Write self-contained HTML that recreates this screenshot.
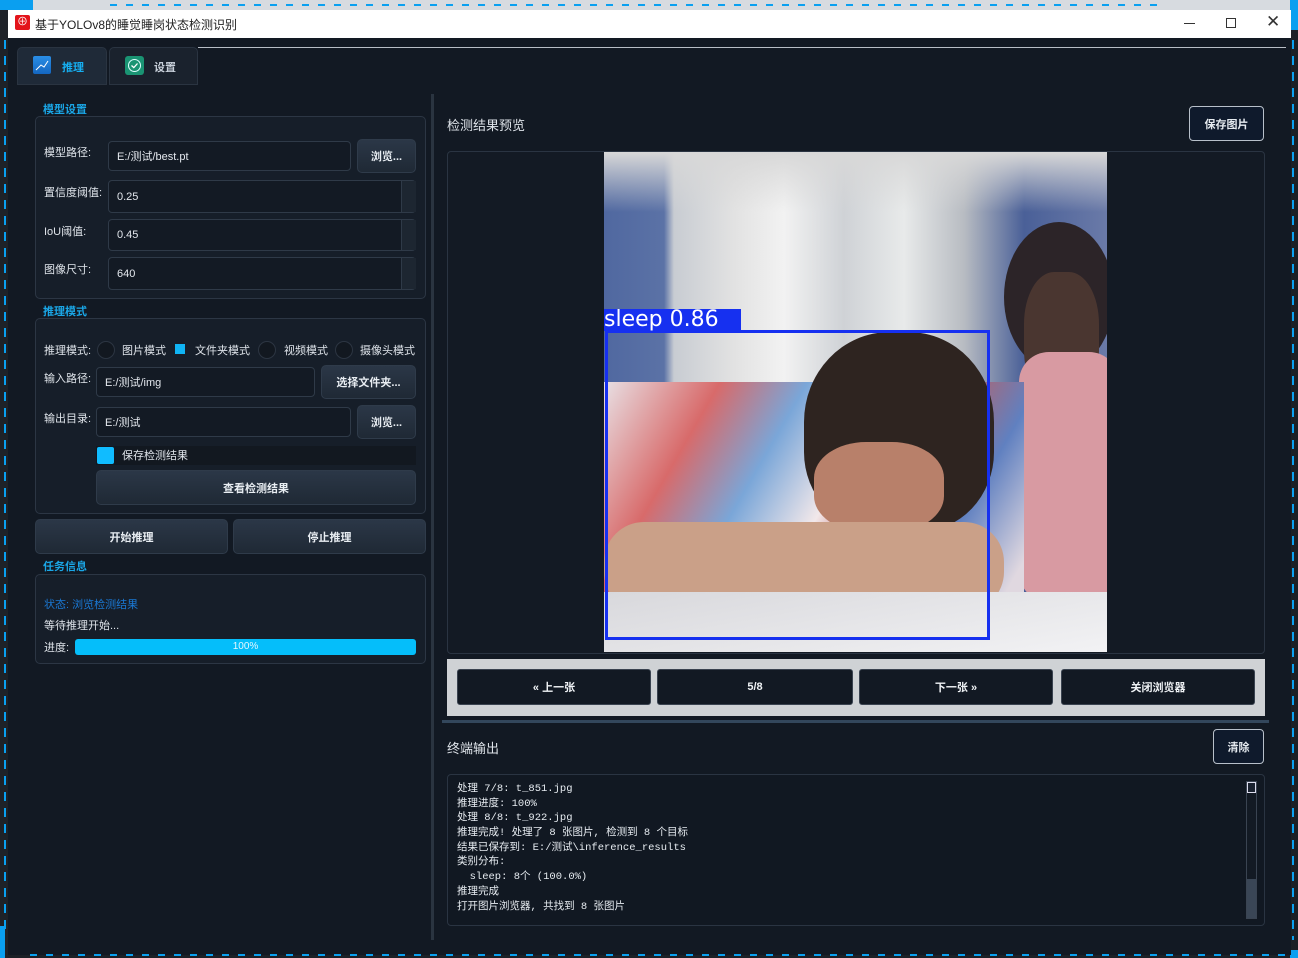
<!DOCTYPE html>
<html><head><meta charset="utf-8"><style>
*{box-sizing:border-box;margin:0;padding:0}
body{width:1298px;height:958px;overflow:hidden;background:#1c2026;font-family:"Liberation Sans","Noto Sans CJK SC",sans-serif;position:relative;color:#dde3ea}
.a{position:absolute}
.dash{position:absolute;background:repeating-linear-gradient(90deg,#0aa0f0 0 7px,transparent 7px 16px)}
.vdash{position:absolute;background:repeating-linear-gradient(180deg,#0aa0f0 0 9px,transparent 9px 16px)}
.win{position:absolute;left:8px;top:10px;width:1283px;height:945px;background:#121923}
.title{position:absolute;left:0;top:0;width:1283px;height:28px;background:#fff;color:#222;font-size:12px}
.grp{position:absolute;border:1px solid #2c3644;border-radius:5px;background:#161e29}
.gt{position:absolute;color:#1aa6e6;font-size:11px;font-weight:bold;margin-top:-1px}
.lbl{position:absolute;font-size:11px;color:#dfe4ea;margin-top:-2px}
.inp{position:absolute;border:1px solid #2f3a48;border-radius:4px;background:#131a24;font-size:11px;color:#e4e8ee;padding-left:8px;display:flex;align-items:center}
.btn{position:absolute;border:1px solid #2f3b4a;border-radius:5px;background:linear-gradient(#2b3747,#1f2935);font-size:11px;font-weight:bold;color:#e8edf2;display:flex;align-items:center;justify-content:center}
.spin{position:absolute;width:15px;border-left:1px solid #2f3a48;background:#1d2631}
.nb{position:absolute;top:669px;height:36px;background:#121923;border:1px solid #3a4350;border-radius:3px;color:#f0f3f6;font-size:11px;font-weight:bold;display:flex;align-items:center;justify-content:center}
.term div{height:14.7px;white-space:pre}
</style></head><body>
<div class="a" style="left:0;top:0;width:1298px;height:10px;background:#d7dbe0"></div>
<div class="dash" style="left:110px;top:4px;width:1050px;height:2px"></div>
<div class="a" style="left:0;top:0;width:33px;height:30px;background:#0a9ff0"></div>
<div class="a" style="left:1290px;top:0;width:8px;height:30px;background:#0a9ff0"></div>
<div class="a" style="left:0;top:10px;width:8px;height:948px;background:#1e2228"></div>
<div class="vdash" style="left:4px;top:40px;width:2px;height:890px"></div>
<div class="vdash" style="left:1292px;top:40px;width:2px;height:900px"></div>
<div class="a" style="left:0;top:926px;width:5px;height:32px;background:#0a9ff0"></div>
<div class="a" style="left:1290px;top:950px;width:8px;height:8px;background:#0a9ff0"></div>
<div class="win">
 <div class="title">
  <div class="a" style="left:7px;top:5px;width:15px;height:15px;background:#e3141b;border-radius:2px;color:#fff;font-size:11px;text-align:center;line-height:15px">⊕</div>
  <div class="a" style="left:27px;top:6px">基于YOLOv8的睡觉睡岗状态检测识别</div>
  <div class="a" style="left:1176px;top:13px;width:11px;height:1px;background:#333"></div>
  <div class="a" style="left:1218px;top:8px;width:10px;height:10px;border:1px solid #333"></div>
  <div class="a" style="left:1258px;top:2px;font-size:17px;color:#333">✕</div>
 </div>
 <div class="a" style="left:190px;top:37px;width:1088px;height:1px;background:#b8bec6"></div>
 <div class="a" style="left:9px;top:37px;width:90px;height:38px;background:#1f2a38;border:1px solid #2a3441;border-radius:5px 5px 0 0"></div>
 <div class="a" style="left:25px;top:46px;width:18px;height:18px;background:linear-gradient(#2a8ee6,#1466c0);border-radius:2px"><svg width="18" height="18"><path d="M3 14 L8 9 L11 11 L15 5" stroke="#fff" fill="none" stroke-width="1"/></svg></div>
 <div class="a" style="left:54px;top:49px;font-size:11px;font-weight:bold;color:#16aef0">推理</div>
 <div class="a" style="left:101px;top:37px;width:89px;height:38px;background:#1a222d;border:1px solid #2a3441;border-radius:5px 5px 0 0"></div>
 <div class="a" style="left:117px;top:46px;width:19px;height:19px;background:#1a9473;border-radius:3px"><svg width="19" height="19"><circle cx="9.5" cy="9.5" r="6" stroke="#dff" fill="none"/><path d="M6.5 9.5 L8.8 11.6 L12.5 7.5" stroke="#fff" fill="none" stroke-width="1.3"/></svg></div>
 <div class="a" style="left:146px;top:49px;font-size:11px;color:#c8d0da;font-weight:bold">设置</div>
 <div class="a" style="left:423px;top:84px;width:3px;height:846px;background:#2a3440"></div>
</div>
<!-- left panel -->
<div class="gt" style="left:43px;top:102px">模型设置</div>
<div class="grp" style="left:35px;top:116px;width:391px;height:183px"></div>
<div class="lbl" style="left:44px;top:146px">模型路径:</div>
<div class="inp" style="left:108px;top:141px;width:243px;height:30px">E:/测试/best.pt</div>
<div class="btn" style="left:357px;top:139px;width:59px;height:34px">浏览...</div>
<div class="lbl" style="left:44px;top:186px">置信度阈值:</div>
<div class="inp" style="left:108px;top:180px;width:308px;height:33px">0.25</div><div class="spin" style="left:401px;top:181px;height:31px"></div>
<div class="lbl" style="left:44px;top:225px">IoU阈值:</div>
<div class="inp" style="left:108px;top:219px;width:308px;height:32px">0.45</div><div class="spin" style="left:401px;top:220px;height:30px"></div>
<div class="lbl" style="left:44px;top:263px">图像尺寸:</div>
<div class="inp" style="left:108px;top:257px;width:308px;height:33px">640</div><div class="spin" style="left:401px;top:258px;height:31px"></div>

<div class="gt" style="left:43px;top:304px">推理模式</div>
<div class="grp" style="left:35px;top:318px;width:391px;height:196px"></div>
<div class="lbl" style="left:44px;top:344px">推理模式:</div>
<div class="a" style="left:97px;top:341px;width:18px;height:18px;border:1px solid #2c3542;border-radius:50%;background:#121820"></div>
<div class="lbl" style="left:122px;top:344px">图片模式</div>
<div class="a" style="left:175px;top:344px;width:10px;height:10px;background:#10b4f4"></div>
<div class="lbl" style="left:195px;top:344px">文件夹模式</div>
<div class="a" style="left:258px;top:341px;width:18px;height:18px;border:1px solid #2c3542;border-radius:50%;background:#121820"></div>
<div class="lbl" style="left:284px;top:344px">视频模式</div>
<div class="a" style="left:335px;top:341px;width:18px;height:18px;border:1px solid #2c3542;border-radius:50%;background:#121820"></div>
<div class="lbl" style="left:360px;top:344px">摄像头模式</div>
<div class="lbl" style="left:44px;top:372px">输入路径:</div>
<div class="inp" style="left:96px;top:367px;width:219px;height:30px">E:/测试/img</div>
<div class="btn" style="left:321px;top:365px;width:95px;height:34px">选择文件夹...</div>
<div class="lbl" style="left:44px;top:412px">输出目录:</div>
<div class="inp" style="left:96px;top:407px;width:255px;height:30px">E:/测试</div>
<div class="btn" style="left:357px;top:405px;width:59px;height:34px">浏览...</div>
<div class="a" style="left:96px;top:446px;width:320px;height:19px;background:#121820"></div>
<div class="a" style="left:97px;top:447px;width:17px;height:17px;background:#10bcff;border-radius:2px"></div>
<div class="lbl" style="left:122px;top:449px">保存检测结果</div>
<div class="btn" style="left:96px;top:470px;width:320px;height:35px">查看检测结果</div>
<div class="btn" style="left:35px;top:519px;width:193px;height:35px">开始推理</div>
<div class="btn" style="left:233px;top:519px;width:193px;height:35px">停止推理</div>
<div class="gt" style="left:43px;top:559px">任务信息</div>
<div class="grp" style="left:35px;top:574px;width:391px;height:90px"></div>
<div class="lbl" style="left:44px;top:598px;color:#1a78d4">状态: 浏览检测结果</div>
<div class="lbl" style="left:44px;top:619px">等待推理开始...</div>
<div class="lbl" style="left:44px;top:641px">进度:</div>
<div class="a" style="left:75px;top:639px;width:341px;height:16px;background:#05befa;border-radius:3px;font-size:10px;color:#e6f7ff;text-align:center;line-height:16px">100%</div>
<!-- right -->
<div class="a" style="left:447px;top:115px;font-size:13px;color:#dfe4ea">检测结果预览</div>
<div class="a" style="left:1189px;top:106px;width:75px;height:35px;border:1px solid #b8c0ca;border-radius:4px;background:#0f1a2c;font-size:11px;font-weight:bold;color:#e6ebf0;display:flex;align-items:center;justify-content:center">保存图片</div>
<div class="a" style="left:447px;top:151px;width:818px;height:503px;border:1px solid #2a3442;border-radius:4px;background:#131a24"></div>
<div class="a" style="left:604px;top:152px;width:503px;height:500px;overflow:hidden;background:linear-gradient(90deg,#5068a0 0,#5b72a6 60px,#c8ccd2 70px,#e2e2e2 130px,#f2f2f2 180px,#cfd2d6 240px,#e8eaea 300px,#b8bcc2 360px,#4a6098 420px,#6a7aa8 503px)">
 <div class="a" style="left:0;top:0;width:503px;height:60px;background:linear-gradient(#d8d8d8,rgba(220,220,220,0))"></div>
 <div class="a" style="left:400px;top:70px;width:110px;height:150px;border-radius:50%;background:#2c2428"></div>
 <div class="a" style="left:420px;top:120px;width:75px;height:130px;border-radius:40%;background:#4a3630"></div>
 <div class="a" style="left:415px;top:200px;width:100px;height:250px;border-radius:30px;background:#d89aa2"></div>
 <div class="a" style="left:0;top:230px;width:420px;height:280px;background:linear-gradient(120deg,#e8e0e4 0,#d86a6a 20%,#7aa6d8 35%,#f2e8ea 50%,#c06060 60%,#6080c0 75%,#e0d8e0 90%)"></div>
 <div class="a" style="left:200px;top:180px;width:190px;height:200px;border-radius:45% 45% 40% 40%;background:#2e2420"></div>
 <div class="a" style="left:210px;top:290px;width:130px;height:90px;border-radius:40%;background:#b8806a"></div>
 <div class="a" style="left:0;top:370px;width:400px;height:90px;border-radius:40px;background:#caa088"></div>
 <div class="a" style="left:0;top:440px;width:503px;height:60px;background:linear-gradient(170deg,#d8d8dc,#f2f2f4)"></div>
 <div class="a" style="left:1px;top:178px;width:385px;height:310px;border:3px solid #1630f0"></div>
 <div class="a" style="left:0;top:157px;width:137px;height:22px;background:#1630f0;color:#fff;font-size:22px;line-height:22px;font-family:'DejaVu Sans',sans-serif">sleep 0.86</div>
</div>
<div class="a" style="left:447px;top:659px;width:818px;height:57px;background:#cfd2d5"></div>
<div class="nb" style="left:457px;width:194px">« 上一张</div>
<div class="nb" style="left:657px;width:196px">5/8</div>
<div class="nb" style="left:859px;width:194px">下一张 »</div>
<div class="nb" style="left:1061px;width:194px">关闭浏览器</div>
<div class="a" style="left:442px;top:720px;width:827px;height:3px;background:#33475c"></div>
<div class="a" style="left:447px;top:738px;font-size:13px;color:#dfe4ea">终端输出</div>
<div class="a" style="left:1213px;top:729px;width:51px;height:35px;border:1px solid #b8c0ca;border-radius:4px;background:#0f1a2c;font-size:11px;font-weight:bold;color:#e6ebf0;display:flex;align-items:center;justify-content:center">清除</div>
<div class="a" style="left:447px;top:774px;width:818px;height:152px;border:1px solid #2a3442;border-radius:4px;background:#111822"></div>
<div class="a term" style="left:457px;top:782px;font-family:'Liberation Mono','Noto Sans CJK SC',monospace;font-size:10.5px;color:#e6ebf0;line-height:14.7px">
<div>处理 7/8: t_851.jpg</div><div>推理进度: 100%</div><div>处理 8/8: t_922.jpg</div><div>推理完成! 处理了 8 张图片, 检测到 8 个目标</div><div>结果已保存到: E:/测试\inference_results</div><div>类别分布:</div><div>  sleep: 8个 (100.0%)</div><div>推理完成</div><div>打开图片浏览器, 共找到 8 张图片</div>
</div>
<div class="a" style="left:1246px;top:781px;width:11px;height:138px;border:1px solid #3a4452;background:#131a24"></div>
<div class="a" style="left:1247px;top:879px;width:9px;height:39px;background:#3a4656"></div>
<div class="a" style="left:1247px;top:782px;width:9px;height:11px;border:1px solid #dde;background:#1a2230"></div>
<div class="dash" style="left:30px;top:954px;width:1260px;height:2px"></div>
</body></html>
